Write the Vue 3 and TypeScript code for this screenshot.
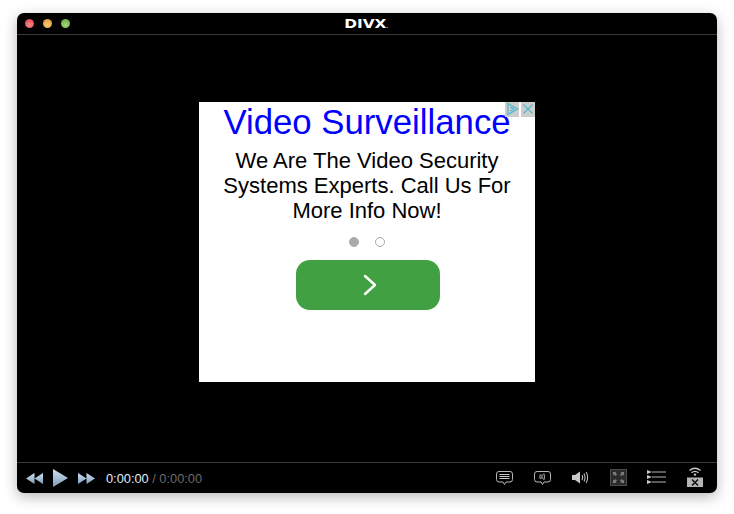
<script setup lang="ts">
const lights = ["red", "amber", "green"];
</script>

<template>
  <div class="page">
    <div class="window">
      <header class="titlebar">
        <div class="lights">
          <span v-for="c in lights" :key="c" class="light" :class="c"></span>
        </div>
        <span class="logo">DIVX<i>.</i></span>
      </header>

      <main class="stage">
        <section class="ad">
          <div class="adchoices">
            <span class="adbox">
              <svg width="14" height="14" viewBox="0 0 14 14">
                <path d="M3 1.5 L12.5 7 L3 12.5 Z M5.5 5 L8.5 7 L5.5 9" fill="none" stroke="#4db8cf" stroke-width="1.2" />
              </svg>
            </span>
            <span class="adbox">
              <svg width="14" height="14" viewBox="0 0 14 14">
                <path d="M2.5 2.5 L11.5 11.5 M11.5 2.5 L2.5 11.5" fill="none" stroke="#4db8cf" stroke-width="1.2" />
              </svg>
            </span>
          </div>
          <h1 class="headline">Video Surveillance</h1>
          <p class="copy">We Are The Video Security Systems Experts. Call Us For More Info Now!</p>
          <div class="dots">
            <span class="dot on"></span>
            <span class="dot"></span>
          </div>
          <button type="button" class="go">
            <svg width="14" height="22" viewBox="0 0 14 22">
              <path d="M2 2 L12 11 L2 20" fill="none" stroke="#fff" stroke-width="2.4" stroke-linecap="round" stroke-linejoin="round" />
            </svg>
          </button>
        </section>
      </main>

      <footer class="controls">
        <div class="transport">
          <svg width="17" height="11" viewBox="0 0 17 11"><path d="M8.5 0 V11 L0 5.5 Z M17 0 V11 L8.5 5.5 Z" fill="url(#blue)" /></svg>
          <svg class="play" width="15" height="18" viewBox="0 0 15 18"><path d="M0 0 L15 9 L0 18 Z" fill="url(#blue)" /></svg>
          <svg width="17" height="11" viewBox="0 0 17 11"><path d="M0 0 V11 L8.5 5.5 Z M8.5 0 V11 L17 5.5 Z" fill="url(#blue)" /></svg>
          <span class="time"><b>0:00:00</b> / 0:00:00</span>
        </div>
        <div class="tools">
          <svg width="17" height="18" viewBox="0 -3 17 18" fill="none" stroke="#b5b5b5">
            <path d="M3 .5 H14 Q16.5 .5 16.5 3 V8.5 Q16.5 11 14 11 H10 L8.5 13.5 L7 11 H3 Q.5 11 .5 8.5 V3 Q.5 .5 3 .5 Z" />
            <path d="M3.5 3.5 H13.5 M3.5 5.5 H13.5 M3.5 7.5 H13.5" stroke="#c8c8c8" />
          </svg>
          <svg width="17" height="18" viewBox="0 -3 17 18" fill="none" stroke="#b5b5b5">
            <path d="M3 .5 H14 Q16.5 .5 16.5 3 V8.5 Q16.5 11 14 11 H10 L8.5 13.5 L7 11 H3 Q.5 11 .5 8.5 V3 Q.5 .5 3 .5 Z" />
            <path d="M8 3.5 V8 M9.8 2.5 Q11.2 5.7 9.8 9 M6.3 3.5 Q5.3 5.7 6.3 8" stroke="#c8c8c8" />
          </svg>
          <svg width="17" height="13" viewBox="0 0 17 13" fill="none">
            <path d="M0 4 H3 L8 .5 V12.5 L3 9 H0 Z" fill="#c8c8c8" />
            <path d="M10 4 Q11.3 6.5 10 9 M12 2.5 Q14 6.5 12 10.5 M14.2 1 Q17 6.5 14.2 12" stroke="#b5b5b5" stroke-width="1.1" />
          </svg>
          <svg width="17" height="17" viewBox="0 0 17 17">
            <rect x=".5" y=".5" width="16" height="16" fill="#2c2c2c" stroke="#4a4a4a" />
            <path d="M3 3 H6.5 L5.5 4 L7 5.5 L5.5 7 L4 5.5 L3 6.5 Z M14 3 V6.5 L13 5.5 L11.5 7 L10 5.5 L11.5 4 L10.5 3 Z M3 14 V10.5 L4 11.5 L5.5 10 L7 11.5 L5.5 13 L6.5 14 Z M14 14 H10.5 L11.5 13 L10 11.5 L11.5 10 L13 11.5 L14 10.5 Z" fill="#7d7d7d" />
          </svg>
          <svg class="list" width="19" height="14" viewBox="0 0 19 14" fill="none">
            <path d="M0 0 L5 2 L0 4 Z M0 5 L5 7 L0 9 Z M0 10 L5 12 L0 14 Z" fill="#c8c8c8" />
            <path d="M5 2 H19 M5 7 H19 M5 12 H19" stroke="#b5b5b5" />
          </svg>
          <svg width="16" height="20" viewBox="0 0 16 20" fill="none">
            <path d="M2.5 3.5 Q8 -1 13.5 3.5 M4.5 5.8 Q8 2.8 11.5 5.8" stroke="#c8c8c8" stroke-width="1.3" />
            <circle cx="8" cy="7.6" r="1.2" fill="#c8c8c8" />
            <rect y="10.5" width="16" height="9.5" fill="#b5b5b5" />
            <path d="M5 12.5 L11 18.5 M11 12.5 L5 18.5" stroke="#111" stroke-width="1.6" />
          </svg>
        </div>
        <svg width="0" height="0" class="defs">
          <defs>
            <linearGradient id="blue" x1="0" y1="0" x2="0" y2="1">
              <stop offset="0" stop-color="#cfe0f1" />
              <stop offset="1" stop-color="#7f9cb9" />
            </linearGradient>
          </defs>
        </svg>
      </footer>
    </div>
  </div>
</template>

<style scoped>
.page {
  width: 734px;
  height: 514px;
  box-sizing: border-box;
  padding: 13px 17px 21px;
  background: #fff;
  font-family: "Liberation Sans", Arial, sans-serif;
}

.window {
  height: 480px;
  display: flex;
  flex-direction: column;
  background: #000;
  border-radius: 7px;
  box-shadow: 0 4px 14px rgba(0, 0, 0, 0.28);
  overflow: hidden;
}

.titlebar {
  position: relative;
  flex: none;
  height: 21px;
  display: flex;
  align-items: center;
  justify-content: center;
  border-bottom: 1px solid #3a3a3a;
}

.lights {
  position: absolute;
  left: 8px;
  top: 6px;
  display: flex;
  gap: 9px;
}

.light {
  width: 9px;
  height: 9px;
  border-radius: 50%;
}

.red {
  background: radial-gradient(circle at 50% 65%, #f78a8c, #d8353d);
}

.amber {
  background: radial-gradient(circle at 50% 65%, #f8cf73, #dd8b2f);
}

.green {
  background: radial-gradient(circle at 50% 65%, #a3d97a, #5a9e3c);
}

.logo {
  color: #fff;
  font-family: "DejaVu Sans", sans-serif;
  font-size: 12px;
  font-weight: 700;
  line-height: 12px;
  transform: scaleX(1.28);
  margin: 4px 0 0 -1px;
}

.logo i {
  font-size: 4px;
  font-style: normal;
}

.stage {
  flex: 1;
  display: flex;
  align-items: center;
  justify-content: center;
  padding-bottom: 14px;
}

.ad {
  position: relative;
  width: 336px;
  height: 280px;
  background: #fff;
  display: flex;
  flex-direction: column;
  align-items: center;
  color: #000;
}

.adchoices {
  position: absolute;
  top: 0;
  right: 0;
  display: flex;
  gap: 2px;
}

.adbox {
  width: 14px;
  height: 15px;
  background: #cdcdcd;
  display: flex;
  align-items: center;
  justify-content: center;
}

.headline {
  margin: 0;
  font-size: 34.75px;
  font-weight: 400;
  line-height: 41px;
  color: #0000ff;
  white-space: nowrap;
}

.copy {
  width: 300px;
  margin: 5px 0 0;
  font-size: 22px;
  line-height: 25px;
  text-align: center;
}

.dots {
  display: flex;
  gap: 16px;
  margin-top: 14px;
}

.dot {
  box-sizing: border-box;
  width: 10px;
  height: 10px;
  border: 1px solid #aaa;
  border-radius: 50%;
}

.dot.on {
  background: #aaa;
}

.go {
  width: 144px;
  height: 50px;
  margin: 13px 0 0 2px;
  border: 0;
  border-radius: 14px;
  background: #41a142;
  display: flex;
  align-items: center;
  justify-content: center;
  padding: 0 0 0 3px;
}

.controls {
  flex: none;
  height: 30px;
  display: flex;
  align-items: center;
  justify-content: space-between;
  padding: 0 14px 0 9px;
  border-top: 1px solid #3a3a3a;
}

.transport {
  display: flex;
  align-items: center;
  gap: 10px;
}

.time {
  margin-left: 1px;
  font-size: 12.8px;
  color: #6b6b6b;
}

.time b {
  font-weight: 400;
  color: #e3ecf5;
}

.tools {
  display: flex;
  align-items: center;
  gap: 21px;
  padding-bottom: 2px;
}

.list {
  margin-left: -1px;
}

.defs {
  position: absolute;
}
</style>
